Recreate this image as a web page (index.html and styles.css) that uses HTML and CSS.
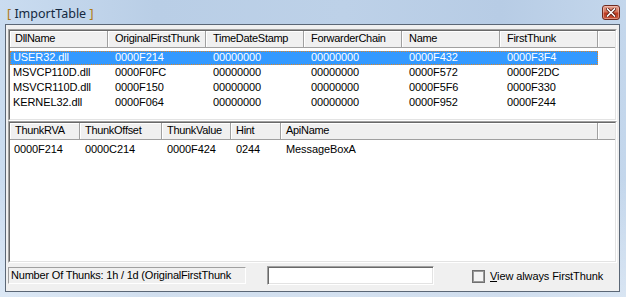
FILE: index.html
```html
<!DOCTYPE html>
<html lang="en">
<head>
    <meta charset="UTF-8">
    <title>ImportTable</title>
    <link rel="stylesheet" href="styles.css">
</head>
<body>
    <div class="window">
        <div class="titlebar">
            <span class="title"><span class="br">[</span> ImportTable <span class="br">]</span></span>
            <div class="close-btn">
                <svg width="10" height="9" viewBox="0 0 10 9">
                    <path d="M1.5 1 L8.5 8 M8.5 1 L1.5 8" stroke="#5a1a10" stroke-width="3.2" stroke-linecap="square"/>
                    <path d="M1.5 1 L8.5 8 M8.5 1 L1.5 8" stroke="#fff" stroke-width="1.6" stroke-linecap="square"/>
                </svg>
            </div>
        </div>

        <div class="client">
            <!-- dll list -->
            <div class="listview dlls">
                <div class="lv-inner">
                    <div class="lv-head">
                        <span>DllName</span>
                        <span>OriginalFirstThunk</span>
                        <span>TimeDateStamp</span>
                        <span>ForwarderChain</span>
                        <span>Name</span>
                        <span>FirstThunk</span>
                        <span></span>
                    </div>
                    <div class="lv-body">
                        <div class="lv-row selected">
                            <span>USER32.dll</span><span>0000F214</span><span>00000000</span><span>00000000</span><span>0000F432</span><span>0000F3F4</span>
                        </div>
                        <div class="lv-row">
                            <span>MSVCP110D.dll</span><span>0000F0FC</span><span>00000000</span><span>00000000</span><span>0000F572</span><span>0000F2DC</span>
                        </div>
                        <div class="lv-row">
                            <span>MSVCR110D.dll</span><span>0000F150</span><span>00000000</span><span>00000000</span><span>0000F5F6</span><span>0000F330</span>
                        </div>
                        <div class="lv-row">
                            <span>KERNEL32.dll</span><span>0000F064</span><span>00000000</span><span>00000000</span><span>0000F952</span><span>0000F244</span>
                        </div>
                    </div>
                </div>
            </div>

            <!-- thunk list -->
            <div class="listview thunks">
                <div class="lv-inner">
                    <div class="lv-head">
                        <span>ThunkRVA</span>
                        <span>ThunkOffset</span>
                        <span>ThunkValue</span>
                        <span>Hint</span>
                        <span>ApiName</span>
                        <span></span>
                    </div>
                    <div class="lv-body">
                        <div class="lv-row">
                            <span>0000F214</span><span>0000C214</span><span>0000F424</span><span>0244</span><span>MessageBoxA</span>
                        </div>
                    </div>
                </div>
            </div>

            <div class="statusbar">
                <div class="status-text">Number Of Thunks: 1h / 1d (OriginalFirstThunk</div>
                <div class="edit"></div>
                <label class="check">
                    <span class="check-box"></span>
                    <span><u>V</u>iew always FirstThunk</span>
                </label>
            </div>
        </div>
    </div>
</body>
</html>
```

FILE: styles.css
```css
* {
    margin: 0;
    padding: 0;
    box-sizing: border-box;
}

body {
    width: 626px;
    height: 297px;
    overflow: hidden;
    font-family: "Liberation Sans", Arial, sans-serif;
    font-size: 11px;
    color: #000;
    background: #c6d9ee;
}

.window {
    width: 626px;
    height: 297px;
    display: flex;
    flex-direction: column;
    padding: 0 6px 5px 5px;
    background:
        linear-gradient(to bottom, rgba(255, 255, 255, 0) 60%, rgba(255, 255, 255, 0.35) 100%),
        linear-gradient(to right, #cadcf0 0%, #b9cee6 25%, #bdd1e8 55%, #b7cce5 80%, #c4d7ec 100%);
}

/* title bar */
.titlebar {
    height: 24px;
    display: flex;
    align-items: flex-start;
    justify-content: space-between;
}

.title {
    font-family: "Noto Sans", "Open Sans", sans-serif;
    font-size: 12.5px;
    color: #142840;
    margin: 6px 0 0 2px;
    line-height: 16px;
}

.title .br {
    color: #b07a10;
}

.close-btn {
    width: 18px;
    height: 15px;
    margin: 5px 0 0 0;
    border: 1px solid #6e2a20;
    border-radius: 3px;
    background: linear-gradient(to bottom, #e3a08e 0%, #d4725a 45%, #bb3a22 55%, #c9553a 100%);
    box-shadow: inset 0 0 0 1px rgba(255, 220, 210, 0.45);
    display: flex;
    align-items: center;
    justify-content: center;
}

/* client area */
.client {
    flex: 1;
    display: flex;
    flex-direction: column;
    background: #f0f0f0;
    border: 1px solid #5b6776;
    padding: 4px 2px 0 2px;
}

.listview {
    border: 1px solid;
    border-color: #a0a0a0 #ffffff #ffffff #a0a0a0;
}

.lv-inner {
    height: 100%;
    border: 1px solid;
    border-color: #696969 #e3e3e3 #e3e3e3 #696969;
    background: #fff;
    display: flex;
    flex-direction: column;
}

.dlls {
    height: 92px;
}

.thunks {
    height: 142px;
}

.lv-head {
    display: grid;
    height: 17px;
    background: #f0f0f0;
    letter-spacing: -0.3px;
}

.lv-head span {
    line-height: 15px;
    padding-left: 5px;
    border-right: 1px solid #a0a0a0;
    border-bottom: 1px solid #a0a0a0;
    box-shadow: inset 1px 1px 0 #fff;
    white-space: nowrap;
    overflow: hidden;
}

.lv-head span:last-child {
    border-right: none;
}

.lv-body {
    flex: 1;
    padding-top: 2px;
}

.lv-row {
    display: grid;
    height: 14px;
    line-height: 13px;
    margin-top: 1px;
    letter-spacing: -0.1px;
}

.lv-row span {
    white-space: nowrap;
    overflow: hidden;
}

.dlls .lv-head {
    grid-template-columns: 98px 98px 98px 98px 98px 98px 1fr;
}

.dlls .lv-row {
    width: 588px;
    grid-template-columns: 98px 98px 98px 98px 98px 98px;
}

.dlls .lv-head span + span,
.dlls .lv-row span + span {
    padding-left: 7px;
}

.dlls .lv-row span:first-child {
    padding-left: 3px;
}

.thunks .lv-head {
    grid-template-columns: 70px 82px 69px 50px 317px 1fr;
}

.thunks .lv-row {
    width: 588px;
    grid-template-columns: 70px 82px 69px 50px 317px;
}

.thunks .lv-row span {
    padding-left: 5px;
}

.thunks .lv-row span:first-child {
    padding-left: 4px;
}

.lv-row.selected {
    background: #3399ff;
    color: #fff;
    outline: 1px dotted #d9862c;
    outline-offset: -1px;
}

/* bottom bar */
.statusbar {
    display: flex;
    align-items: center;
    height: 19px;
    margin-top: 3px;
}

.status-text {
    width: 238px;
    height: 17px;
    line-height: 15px;
    padding-left: 2px;
    letter-spacing: -0.2px;
    border: 1px solid;
    border-color: #a0a0a0 #ffffff #ffffff #a0a0a0;
    white-space: nowrap;
    overflow: hidden;
}

.edit {
    width: 167px;
    height: 19px;
    margin-left: 21px;
    background: #fff;
    border: 1px solid;
    border-color: #a0a0a0 #ffffff #ffffff #a0a0a0;
    box-shadow: inset 1px 1px 0 #696969, inset -1px -1px 0 #e3e3e3;
}

.check {
    display: flex;
    align-items: center;
    gap: 5px;
    margin-left: 38px;
    margin-top: 1px;
    letter-spacing: -0.1px;
}

.check-box {
    width: 13px;
    height: 13px;
    border: 1px solid #707070;
    background: #f4f4f4;
    box-shadow: inset 0 0 0 1px #9a9a9a;
}
```
